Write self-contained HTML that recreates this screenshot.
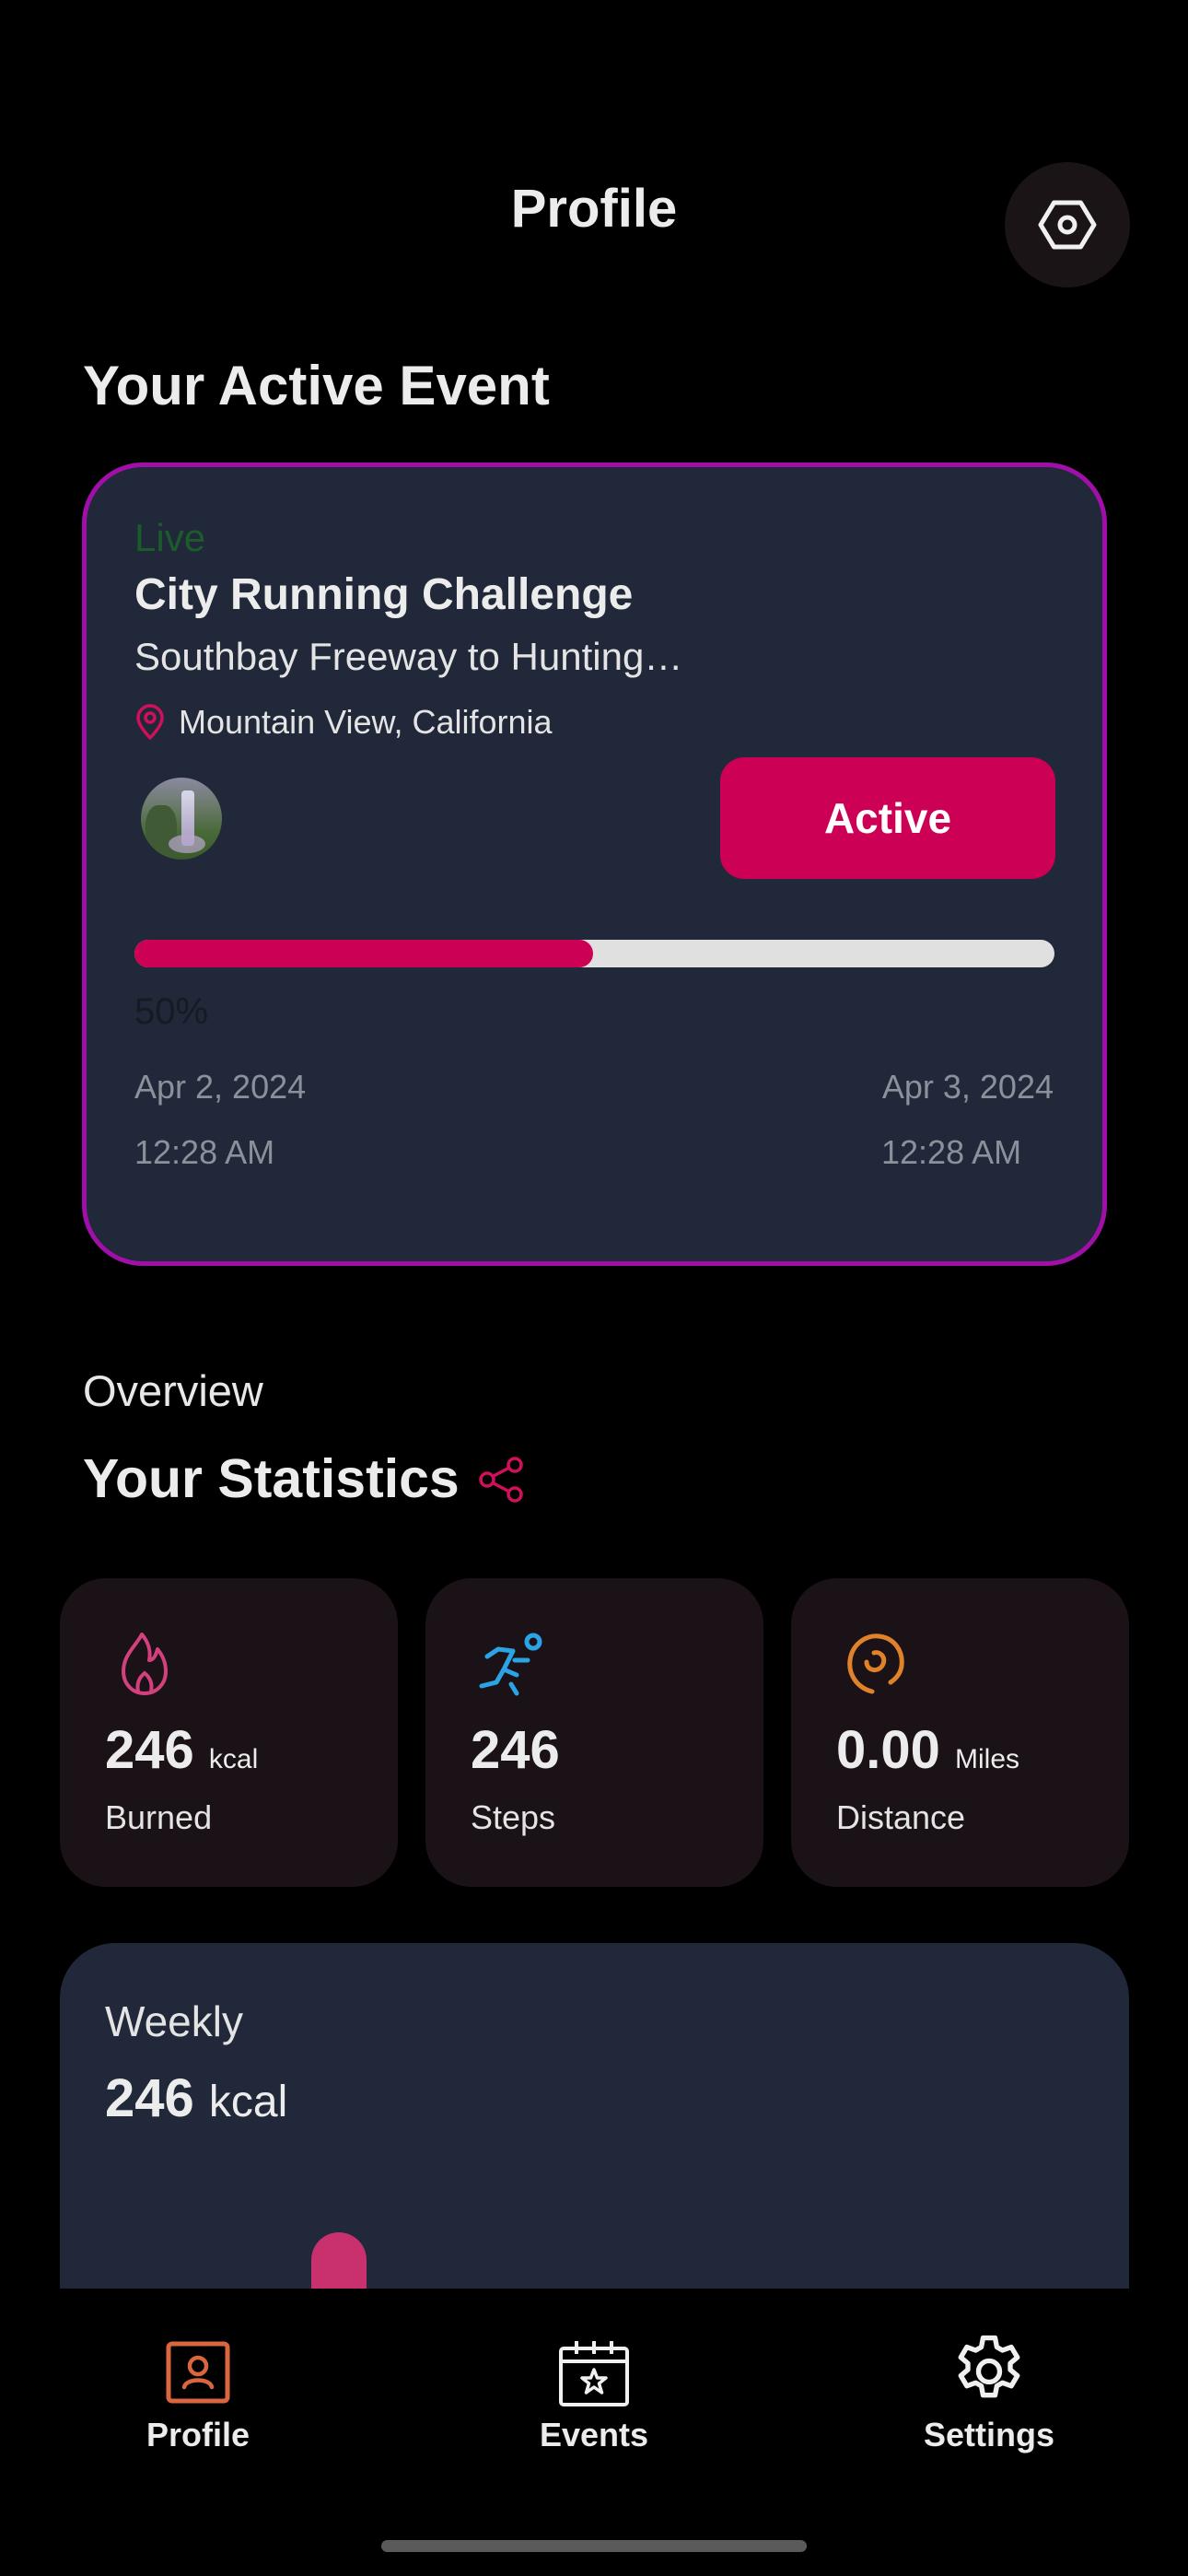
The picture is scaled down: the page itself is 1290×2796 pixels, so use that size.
<!DOCTYPE html>
<html><head><meta charset="utf-8">
<style>
*{margin:0;padding:0;box-sizing:border-box}
html,body{width:1290px;height:2796px;background:#000;overflow:hidden}
body{position:relative;font-family:"Liberation Sans",sans-serif;color:#ececec}
.a{position:absolute;white-space:nowrap}
.b{font-weight:bold}
.card{position:absolute;background:#1a1216;border-radius:50px;top:1713px;height:335px;width:367px}
</style></head><body>

<div class="a b" style="left:0;width:1290px;text-align:center;top:198px;font-size:58px;line-height:58px">Profile</div>
<div class="a" style="left:1091px;top:176px;width:136px;height:136px;border-radius:50%;background:#1a1416"></div>
<svg class="a" style="left:1121px;top:206px" width="76" height="76" viewBox="0 0 76 76">
<polygon points="9,38 23.5,14 52.5,14 67,38 52.5,62 23.5,62" fill="none" stroke="#f0f0f0" stroke-width="5" stroke-linejoin="round"/>
<circle cx="38" cy="38" r="8" fill="none" stroke="#f0f0f0" stroke-width="5"/>
</svg>

<div class="a b" style="left:90px;top:389px;font-size:60px;line-height:60px">Your Active Event</div>

<div class="a" style="left:89px;top:502px;width:1113px;height:872px;border:5px solid #a010a8;border-radius:66px;background:#202839"></div>
<div class="a" style="left:146px;top:563px;font-size:42px;line-height:42px;color:#1b5c2a">Live</div>
<div class="a b" style="left:146px;top:622px;font-size:48px;line-height:48px">City Running Challenge</div>
<div class="a" style="left:146px;top:692px;font-size:42px;line-height:42px;color:#e4e4e4">Southbay Freeway to Hunting…</div>
<svg class="a" style="left:146px;top:764px" width="34" height="40" viewBox="0 0 34 40">
<path d="M17 37 C 8 27 4 21 4 15 A13 13 0 0 1 30 15 C 30 21 26 27 17 37 Z" fill="none" stroke="#d0105a" stroke-width="3.5" stroke-linejoin="round"/>
<circle cx="17" cy="15" r="5" fill="none" stroke="#d0105a" stroke-width="3.5"/>
</svg>
<div class="a" style="left:194px;top:766px;font-size:36px;line-height:36px;color:#e4e4e4">Mountain View, California</div>

<div class="a" style="left:153px;top:844px;width:88px;height:89px;border-radius:50%;overflow:hidden;background:linear-gradient(180deg,#8a8aa0 0%,#6b7a6a 35%,#4a6a3a 65%,#3a5a2a 100%)">
<div style="position:absolute;left:44px;top:14px;width:14px;height:60px;background:linear-gradient(180deg,#d8d8e8,#a89ac0);border-radius:4px"></div>
<div style="position:absolute;left:5px;top:30px;width:34px;height:55px;background:#3f5a35;border-radius:40% 40% 0 0"></div>
<div style="position:absolute;left:30px;top:62px;width:40px;height:20px;background:#b9a8cf;border-radius:50%;opacity:.7"></div>
</div>

<div class="a b" style="left:782px;top:822px;width:364px;height:132px;border-radius:26px;background:#cc0055;font-size:46px;line-height:132px;text-align:center;color:#fff">Active</div>

<div class="a" style="left:146px;top:1020px;width:999px;height:30px;border-radius:15px;background:#e0e0e0"></div>
<div class="a" style="left:146px;top:1020px;width:498px;height:30px;border-radius:15px;background:#cc0055"></div>
<div class="a" style="left:146px;top:1078px;font-size:40px;line-height:40px;color:#171a22">50%</div>
<div class="a" style="left:146px;top:1162px;font-size:36px;line-height:36px;color:#8b909a">Apr 2, 2024</div>
<div class="a" style="left:146px;top:1233px;font-size:36px;line-height:36px;color:#8b909a">12:28 AM</div>
<div class="a" style="right:146px;top:1162px;font-size:36px;line-height:36px;color:#8b909a">Apr 3, 2024</div>
<div class="a" style="left:957px;top:1233px;font-size:36px;line-height:36px;color:#8b909a">12:28 AM</div>

<div class="a" style="left:90px;top:1486px;font-size:47px;line-height:47px;color:#e8e8e8">Overview</div>
<div class="a b" style="left:90px;top:1576px;font-size:59px;line-height:59px">Your Statistics</div>
<svg class="a" style="left:519px;top:1580px" width="52" height="52" viewBox="0 0 52 52">
<g fill="none" stroke="#d0105a" stroke-width="3.5">
<circle cx="40" cy="10" r="7"/><circle cx="40" cy="42" r="7"/><circle cx="10" cy="26" r="7"/>
<line x1="16" y1="22.5" x2="34" y2="13"/><line x1="16" y1="29.5" x2="34" y2="39"/></g>
</svg>

<div class="card" style="left:65px"></div>
<div class="card" style="left:462px"></div>
<div class="card" style="left:859px"></div>

<svg class="a" style="left:126px;top:1770px" width="62" height="72" viewBox="0 0 62 72">
<path d="M28 4 C 22 16 8 26 8 44 C 8 58 18 68 31 68 C 44 68 54 58 54 44 C 54 34 50 26 45 20 C 43 28 40 32 36 32 C 38 22 35 12 28 4 Z" fill="none" stroke="#d2407e" stroke-width="4" stroke-linejoin="round"/>
<path d="M24 66 C 22 56 26 50 31 46 C 36 50 40 56 38 66" fill="none" stroke="#d2407e" stroke-width="4"/>
</svg>
<svg class="a" style="left:517px;top:1768px" width="78" height="74" viewBox="0 0 78 74">
<g fill="none" stroke="#2aa4e4" stroke-width="5" stroke-linecap="round" stroke-linejoin="round">
<circle cx="62" cy="14" r="7"/>
<path d="M12 30 L24 22 L40 24 L30 44 L44 50"/>
<path d="M30 44 L22 58 L6 62"/>
<path d="M38 60 L44 70"/>
<path d="M42 34 L56 34"/></g>
</svg>
<svg class="a" style="left:917px;top:1770px" width="68" height="70" viewBox="0 0 68 70">
<g fill="none" stroke="#e0822a" stroke-width="5" stroke-linecap="round">
<path d="M30 66 C 14 62 4 48 6 32 C 8 16 22 4 38 6 C 54 8 64 22 62 38 C 61 46 56 52 50 56"/>
<path d="M24 34 C 24 44 38 46 42 36 C 45 28 38 22 32 24"/></g>
</svg>

<div class="a b" style="left:114px;top:1871px;font-size:58px;line-height:58px">246 <span style="font-weight:normal;font-size:30px">kcal</span></div>
<div class="a" style="left:114px;top:1955px;font-size:36px;line-height:36px;color:#e4e4e4">Burned</div>
<div class="a b" style="left:511px;top:1871px;font-size:58px;line-height:58px">246</div>
<div class="a" style="left:511px;top:1955px;font-size:36px;line-height:36px;color:#e4e4e4">Steps</div>
<div class="a b" style="left:908px;top:1871px;font-size:58px;line-height:58px">0.00 <span style="font-weight:normal;font-size:30px">Miles</span></div>
<div class="a" style="left:908px;top:1955px;font-size:36px;line-height:36px;color:#e4e4e4">Distance</div>

<div class="a" style="left:65px;top:2109px;width:1161px;height:375px;border-radius:60px 60px 0 0;background:#202839"></div>
<div class="a" style="left:114px;top:2171px;font-size:46px;line-height:46px;color:#e4e4e4">Weekly</div>
<div class="a b" style="left:114px;top:2249px;font-size:58px;line-height:58px">246 <span style="font-weight:normal;font-size:48px">kcal</span></div>
<div class="a" style="left:338px;top:2423px;width:60px;height:61px;border-radius:30px 30px 0 0;background:#c8306e"></div>

<svg class="a" style="left:180px;top:2541px" width="70" height="68" viewBox="0 0 70 68">
<rect x="3" y="3" width="64" height="62" rx="4" fill="none" stroke="#d9663f" stroke-width="5"/>
<circle cx="35" cy="27" r="9" fill="none" stroke="#d9663f" stroke-width="4.5"/>
<path d="M20 50 C 22 40 48 40 50 50" fill="none" stroke="#d9663f" stroke-width="4.5" stroke-linecap="round"/>
</svg>
<div class="a b" style="left:115px;width:200px;text-align:center;top:2625px;font-size:36px;line-height:36px">Profile</div>

<svg class="a" style="left:606px;top:2538px" width="78" height="76" viewBox="0 0 78 74">
<g fill="none" stroke="#f0f0f0" stroke-width="4">
<rect x="3" y="10" width="72" height="61" rx="3"/>
<line x1="3" y1="24" x2="75" y2="24"/>
<line x1="20" y1="2" x2="20" y2="16"/><line x1="39" y1="2" x2="39" y2="16"/><line x1="58" y1="2" x2="58" y2="16"/>
<polygon points="39,33 42.5,42 52,42 44.5,48 47.5,58 39,52 30.5,58 33.5,48 26,42 35.5,42" stroke-width="3.5" stroke-linejoin="round"/></g>
</svg>
<div class="a b" style="left:545px;width:200px;text-align:center;top:2625px;font-size:36px;line-height:36px">Events</div>

<svg class="a" style="left:1028px;top:2528px" width="92" height="92" viewBox="0 0 24 24">
<g fill="none" stroke="#f0f0f0" stroke-width="1.4" stroke-linejoin="round">
<path d="M10.3 2.5h3.4l.5 2.6 1.6.9 2.5-.9 1.7 2.9-2 1.7v1.8l2 1.7-1.7 2.9-2.5-.9-1.6.9-.5 2.6h-3.4l-.5-2.6-1.6-.9-2.5.9-1.7-2.9 2-1.7v-1.8l-2-1.7 1.7-2.9 2.5.9 1.6-.9z"/>
<circle cx="12" cy="12" r="3"/></g>
</svg>
<div class="a b" style="left:974px;width:200px;text-align:center;top:2625px;font-size:36px;line-height:36px">Settings</div>

<div class="a" style="left:414px;top:2757px;width:462px;height:13px;border-radius:7px;background:#5a5a5a"></div>
</body></html>
